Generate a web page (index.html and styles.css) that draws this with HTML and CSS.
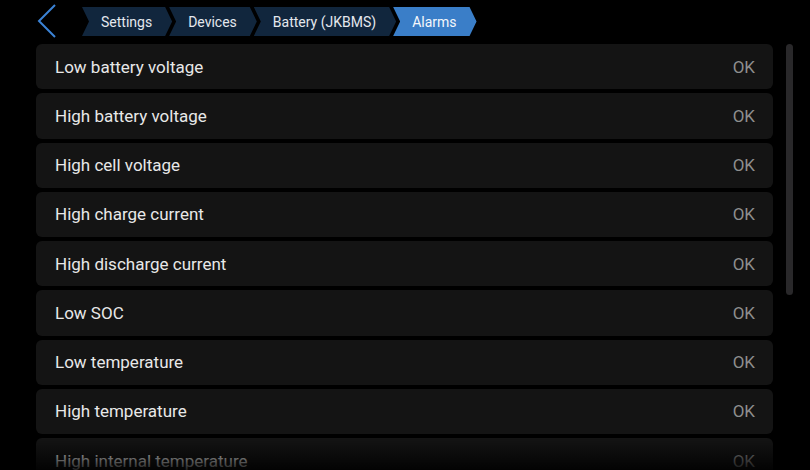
FILE: index.html
```html
<!DOCTYPE html>
<html>
<head>
<meta charset="utf-8">
<link rel="stylesheet" href="styles.css">
</head>
<body>
<div class="screen">
  <header class="topbar">
    <div class="back">
      <svg width="20" height="34" viewBox="0 0 20 34"><polyline points="18,1 2,17 18,33" fill="none" stroke="#3b83d6" stroke-width="2"/></svg>
    </div>
    <nav class="crumbs">
      <span class="crumb">Settings</span>
      <span class="crumb">Devices</span>
      <span class="crumb">Battery (JKBMS)</span>
      <span class="crumb active">Alarms</span>
    </nav>
  </header>
  <main class="content">
    <ul class="list">
      <li class="row"><span class="label">Low battery voltage</span><span class="value">OK</span></li>
      <li class="row"><span class="label">High battery voltage</span><span class="value">OK</span></li>
      <li class="row"><span class="label">High cell voltage</span><span class="value">OK</span></li>
      <li class="row"><span class="label">High charge current</span><span class="value">OK</span></li>
      <li class="row"><span class="label">High discharge current</span><span class="value">OK</span></li>
      <li class="row"><span class="label">Low SOC</span><span class="value">OK</span></li>
      <li class="row"><span class="label">Low temperature</span><span class="value">OK</span></li>
      <li class="row"><span class="label">High temperature</span><span class="value">OK</span></li>
      <li class="row"><span class="label">High internal temperature</span><span class="value">OK</span></li>
    </ul>
    <div class="scrollbar"></div>
  </main>
  <div class="fade"></div>
</div>
</body>
</html>
```
FILE: styles.css
```css
* { box-sizing: border-box; }
html, body { margin: 0; padding: 0; background: #000; }
body { font-family: Roboto, "Noto Sans", sans-serif; color: #e6e6e6; }
.screen { position: relative; width: 810px; height: 470px; overflow: hidden; background: #000; }
.topbar { display: flex; align-items: center; height: 44px; padding-left: 37px; }
.back { width: 20px; height: 34px; margin-top: -2px; }
.back svg { display: block; }
.crumbs { display: flex; margin-left: 25px; margin-top: -1px; }
.crumb {
  display: flex; align-items: center;
  height: 29px;
  padding: 0 20px 0 19px;
  background: #11263d;
  color: #e4e8ee;
  font-size: 14px;
  clip-path: polygon(0 0, calc(100% - 7px) 0, 100% 50%, calc(100% - 7px) 100%, 0 100%, 7px 50%);
}
.crumb + .crumb { margin-left: -3px; }
.crumb.active { background: #3a7ec8; color: #f4f7fb; }
.content { display: flex; padding-left: 36px; }
.list { list-style: none; margin: 0; padding: 0; width: 737px; display: flex; flex-direction: column; gap: 4px; }
.row {
  display: flex; align-items: center; justify-content: space-between;
  height: 45.25px; flex: none; padding: 0 18px 0 19px;
  background: #141414; border-radius: 6px;
}
.label { font-size: 17px; color: #e8e8e8; }
.value { font-size: 17px; color: #8e8e8e; }
.scrollbar { width: 7px; height: 251px; margin-left: 13px; border-radius: 4px; background: #29282a; }
.fade { position: absolute; left: 0; right: 0; bottom: 0; height: 32px; background: linear-gradient(to bottom, rgba(0,0,0,0), rgba(0,0,0,0.85)); pointer-events: none; }
```
